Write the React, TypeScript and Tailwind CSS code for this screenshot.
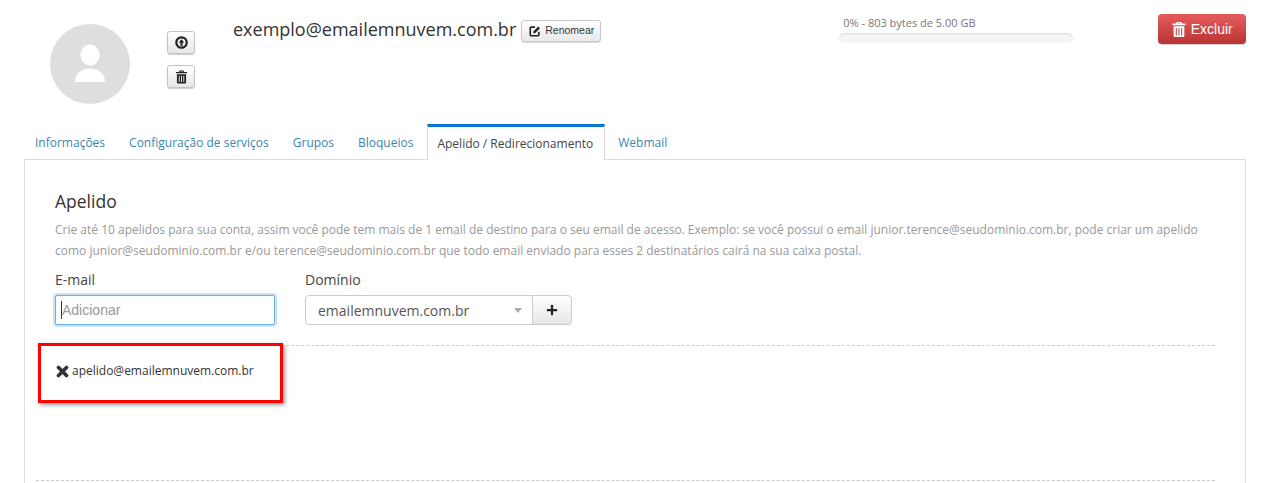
import React from "react";
import { FaPlus } from "react-icons/fa";

function Trash({ className }: { className: string }) {
  return (
    <svg viewBox="0 0 12 14" className={className} fill="currentColor">
      <path d="M4 0h4l.8 1.500H12V3H0V1.500h3.200zM5 1v.5h2V1z" fillRule="evenodd" />
      <path fillRule="evenodd" d="M1 4h10v9a1 1 0 0 1-1 1H2a1 1 0 0 1-1-1zM3 5.500v7h1v-7zm2.500 0v7h1v-7zm2.500 0v7h1v-7z" />
    </svg>
  );
}

function UploadCircle({ className }: { className: string }) {
  return (
    <svg viewBox="0 0 14 14" className={className}>
      <circle cx="7" cy="7" r="5.6" fill="none" stroke="currentColor" strokeWidth="2.400" />
      <path d="M7 3.600 10 7H8.200v3.400H5.800V7H4z" fill="currentColor" />
    </svg>
  );
}

function EditIcon({ className }: { className: string }) {
  return (
    <svg viewBox="0 0 14 14" className={className}>
      <path d="M7 2.500H2.500A1 1 0 0 0 1.500 3.500v8a1 1 0 0 0 1 1h8a1 1 0 0 0 1-1V8" fill="none" stroke="currentColor" strokeWidth="1.900" />
      <path d="M5 7.500 10.800 1.700l2 2L7 9.500H5z" fill="currentColor" />
    </svg>
  );
}

function XIcon({ className }: { className: string }) {
  return (
    <svg viewBox="0 0 12 12" className={className}>
      <path d="M2.300 2.300l7.400 7.400M9.700 2.300 2.300 9.700" fill="none" stroke="currentColor" strokeWidth="3.400" strokeLinecap="round" />
    </svg>
  );
}

const smallBtn =
  "flex h-[23px] w-[28px] items-center justify-center rounded-[3px] border border-[#c4c4c4] bg-gradient-to-b from-white to-[#e6e6e6] text-[#222] shadow-[0_1px_1px_rgba(0,0,0,0.2)]";

export default function App() {
  return (
    <div className="h-[483px] w-[1264px] overflow-hidden bg-white font-['Open_Sans',sans-serif] text-[#333]">
      <div className="flex h-[124px] items-start">
        <div className="ml-[50px] mt-[24px] flex h-[80px] w-[80px] items-center justify-center overflow-hidden rounded-full bg-[#dedede]">
          <svg viewBox="0 0 80 80" className="h-[80px] w-[80px]" fill="#fff">
            <ellipse cx="40" cy="31" rx="9.5" ry="10.5" />
            <path d="M25 58c0-9 7-13.500 15-13.500S55 49 55 58z" />
          </svg>
        </div>
        <div className="ml-[37px] mt-[31px] flex flex-col gap-[11px]">
          <button className={smallBtn}><UploadCircle className="h-[13px] w-[13px]" /></button>
          <button className={smallBtn}><Trash className="h-[14px] w-[11px]" /></button>
        </div>
        <div className="ml-[38px] mt-[17px] flex items-start">
          <span className="text-[18px] leading-[24px] text-[#333]">exemplo@emailemnuvem.com.br</span>
          <button className="ml-[5px] mt-[3px] flex h-[22px] w-[80px] items-center justify-center gap-[4px] rounded-[3px] border border-[#c8c8c8] bg-gradient-to-b from-white to-[#e9e9e9] pl-[1px] font-['Liberation_Sans',sans-serif] text-[10.5px] text-[#333] shadow-[0_1px_1px_rgba(0,0,0,0.15)]">
            <EditIcon className="h-[12px] w-[12px] text-[#222]" />
            Renomear
          </button>
        </div>
        <div className="ml-[238px] mt-[15px] w-[234px]">
          <div className="pl-[4px] text-[11px] leading-[16px] text-[#777]">0% - 803 bytes de 5.00 GB</div>
          <div className="mt-[2px] h-[10px] rounded-[5px] bg-[#f5f5f5] shadow-[inset_0_1px_2px_rgba(0,0,0,0.1)]" />
        </div>
        <button className="ml-[85px] mt-[14px] flex h-[30px] w-[88px] items-center justify-center gap-[5px] rounded-[4px] bg-gradient-to-b from-[#e65c5c] to-[#b93434] font-['Liberation_Sans',sans-serif] text-[14px] text-white shadow-[0_1px_1px_rgba(0,0,0,0.2)]">
          <Trash className="h-[15px] w-[14px]" />
          Excluir
        </button>
      </div>

      <div className="relative z-10 -mb-px flex h-[36px] pl-[24px] text-[12px]">
        <a className="flex items-center px-[11px] pt-[2px] text-[#3a87ad]">Informações</a>
        <a className="flex items-center px-[13px] pt-[2px] text-[#3a87ad]">Configuração de serviços</a>
        <a className="flex items-center px-[11px] pt-[2px] text-[#3a87ad]">Grupos</a>
        <a className="flex items-center pl-[13px] pr-[14px] pt-[2px] text-[#3a87ad]">Bloqueios</a>
        <a className="flex items-center border-x border-t-[3px] border-x-[#ddd] border-t-[#0b78d0] bg-white pl-[9px] pr-[11px] text-[#444]">Apelido / Redirecionamento</a>
        <a className="flex items-center px-[13px] pt-[2px] text-[#3a87ad]">Webmail</a>
      </div>

      <div className="relative ml-[24px] h-[330px] w-[1222px] border border-[#ddd] px-[30px] pt-[29px]">
        <h2 className="text-[17.500px] leading-[24px] text-[#333]">Apelido</h2>
        <p className="mt-[6px] w-[1150px] text-[12px] leading-[21px] text-[#999]">
          Crie até 10 apelidos para sua conta, assim você pode tem mais de 1 email de destino para o seu email de acesso. Exemplo: se você possui o email junior.terence@seudominio.com.br, pode criar um apelido como junior@seudominio.com.br e/ou terence@seudominio.com.br que todo email enviado para esses 2 destinatários cairá na sua caixa postal.
        </p>
        <div className="mt-[9px] flex gap-[30px]">
          <div className="w-[220px]">
            <label className="block text-[14px] leading-[20px] text-[#444]">E-mail</label>
            <div className="mt-[5px] flex h-[30px] items-center rounded-[2px] border border-[#66afe9] pl-[5px] font-['Liberation_Sans',sans-serif] text-[14px] text-[#999] shadow-[0_0_0_2px_rgba(102,175,233,0.35)]">
              <span className="h-[18px] w-px bg-[#333]" />Adicionar
            </div>
          </div>
          <div>
            <label className="block text-[14px] leading-[20px] text-[#444]">Domínio</label>
            <div className="mt-[5px] flex h-[30px]">
              <div className="flex w-[228px] items-center justify-between rounded-l-[4px] border border-[#ccc] pl-[12px] pr-[10px] text-[14px] text-[#555]">
                emailemnuvem.com.br
                <span className="h-0 w-0 border-x-[4px] border-t-[5px] border-x-transparent border-t-[#aaa]" />
              </div>
              <button className="-ml-px flex w-[40px] items-center justify-center rounded-r-[4px] border border-[#ccc] bg-gradient-to-b from-white to-[#e6e6e6] text-[#222]">
                <FaPlus className="h-[12px] w-[12px]" />
              </button>
            </div>
          </div>
        </div>
        <div className="-ml-[19px] mt-[20px] w-[1179px] border-t border-dashed border-[#ccc]" />
        <div className="mt-[16px] flex items-center gap-[3px] pl-[1px] text-[12px] leading-[18px] text-[#333]">
          <XIcon className="h-[13px] w-[13px] text-[#333]" />
          apelido@emailemnuvem.com.br
        </div>
        <div className="-ml-[19px] mt-[100px] w-[1179px] border-t border-dashed border-[#ccc]" />
        <div className="absolute left-[13px] top-[183px] h-[60px] w-[245px] border-[3px] border-[#f00] shadow-[2px_2px_4px_rgba(0,0,0,0.4)]" />
      </div>
    </div>
  );
}
